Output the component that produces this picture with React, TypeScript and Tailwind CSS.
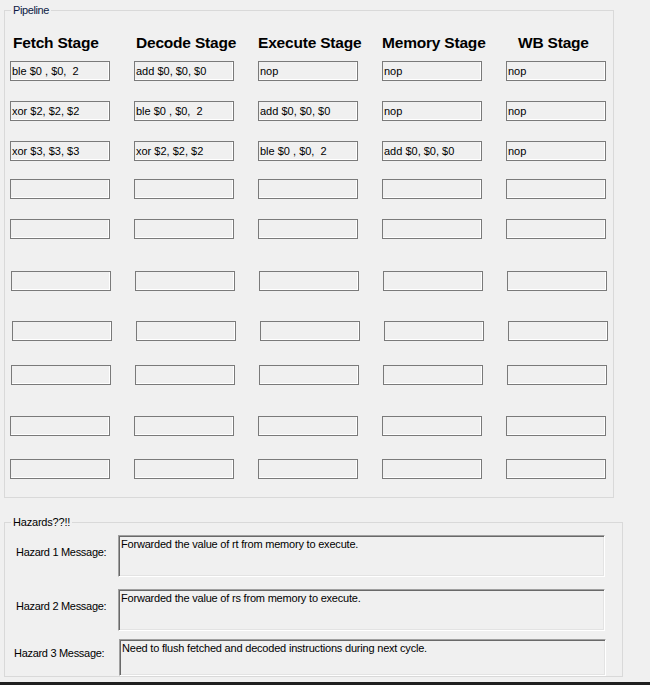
import React from "react";

const FONT = "font-['Liberation_Sans',Arial,sans-serif]";

type Row = { gap: number; shift: number; cells: string[] };

const rows: Row[] = [
    { gap: 8, shift: 0, cells: ["ble $0 , $0,  2", "add $0, $0, $0", "nop", "nop", "nop"] },
    { gap: 20, shift: 0, cells: ["xor $2, $2, $2", "ble $0 , $0,  2", "add $0, $0, $0", "nop", "nop"] },
    { gap: 20, shift: 0, cells: ["xor $3, $3, $3", "xor $2, $2, $2", "ble $0 , $0,  2", "add $0, $0, $0", "nop"] },
    { gap: 18, shift: 0, cells: ["", "", "", "", ""] },
    { gap: 20, shift: 0, cells: ["", "", "", "", ""] },
    { gap: 32, shift: 1, cells: ["", "", "", "", ""] },
    { gap: 30, shift: 2, cells: ["", "", "", "", ""] },
    { gap: 24, shift: 1, cells: ["", "", "", "", ""] },
    { gap: 31, shift: 0, cells: ["", "", "", "", ""] },
    { gap: 23, shift: 0, cells: ["", "", "", "", ""] },
];

const headers = [
    { label: "Fetch Stage", pad: "pl-[3px]" },
    { label: "Decode Stage", pad: "pl-[2px]" },
    { label: "Execute Stage", pad: "pl-0" },
    { label: "Memory Stage", pad: "pl-0" },
    { label: "WB Stage", pad: "pl-[12px]" },
];

const hazards = [
    {
        label: "Hazard 1 Message:",
        text: "Forwarded the value of rt from memory to execute.",
        rowGap: "mt-[12px]",
        labelBox: "w-[113px] pl-[11px] mt-[11px]",
        height: "h-[42px]",
    },
    {
        label: "Hazard 2 Message:",
        text: "Forwarded the value of rs from memory to execute.",
        rowGap: "mt-[12px]",
        labelBox: "w-[113px] pl-[11px] mt-[11px]",
        height: "h-[42px]",
    },
    {
        label: "Hazard 3 Message:",
        text: "Need to flush fetched and decoded instructions during next cycle.",
        rowGap: "mt-[8px]",
        labelBox: "w-[114px] pl-[9px] mt-[8px]",
        height: "h-[37px]",
    },
];

function StageBox({ value }: { value: string }) {
    return (
        <div className="flex h-[20px] w-[100px] items-center border border-[#7a7a7a] bg-[#f0f0f0] pl-[1px] text-[11px] leading-[18px] shadow-[inset_-1px_-1px_0_#ffffff]">
            <span className="whitespace-pre text-black">{value}</span>
        </div>
    );
}

function GroupLegend({ text, className }: { text: string; className: string }) {
    return (
        <span
            className={`absolute left-[6px] bg-[#f0f0f0] px-[2px] text-[11px] leading-[14px] ${className}`}
        >
            {text}
        </span>
    );
}

export default function App() {
    return (
        <div className={`${FONT} flex h-[685px] w-[650px] flex-col overflow-hidden bg-[#f0f0f0] text-black`}>
            {/* Pipeline group */}
            <div className="relative ml-[4px] mt-[10px] h-[488px] w-[610px] border border-[#d9d9d9]">
                <GroupLegend text="Pipeline" className="top-[-8px] tracking-[-0.4px] text-[#0c1a44]" />

                <div className="flex gap-[24px] pl-[5px] pt-[22px]">
                    {headers.map((h) => (
                        <div
                            key={h.label}
                            className={`h-[20px] w-[100px] whitespace-nowrap text-[15.5px] font-bold leading-[20px] tracking-[-0.2px] ${h.pad}`}
                        >
                            {h.label}
                        </div>
                    ))}
                </div>

                {rows.map((r, i) => (
                    <div
                        key={i}
                        className="flex gap-[24px]"
                        style={{ marginTop: r.gap, paddingLeft: 5 + r.shift }}
                    >
                        {r.cells.map((c, j) => (
                            <StageBox key={j} value={c} />
                        ))}
                    </div>
                ))}
            </div>

            {/* Hazards group */}
            <div className="relative ml-[4px] mt-[24px] h-[155px] w-[619px] border border-[#d9d9d9]">
                <GroupLegend text="Hazards??!!" className="top-[-8px] tracking-[-0.2px]" />

                {hazards.map((h) => (
                    <div key={h.label} className={`flex items-start ${h.rowGap}`}>
                        <div
                            className={`shrink-0 whitespace-nowrap text-[11px] leading-[13px] tracking-[-0.3px] ${h.labelBox}`}
                        >
                            {h.label}
                        </div>
                        <div
                            className={`${h.height} w-[487px] border border-b-white border-l-[#a0a0a0] border-r-white border-t-[#a0a0a0] bg-[#f0f0f0] pl-[1px] pt-[1px] shadow-[inset_1px_1px_0_#696969,inset_-1px_-1px_0_#e3e3e3]`}
                        >
                            <div className="pl-[1px] pt-[1px] text-[11px] leading-[13px] tracking-[-0.2px]">
                                {h.text}
                            </div>
                        </div>
                    </div>
                ))}
            </div>

            <div className="mt-[5px] h-[3px] w-full bg-[#202020]" />
        </div>
    );
}
